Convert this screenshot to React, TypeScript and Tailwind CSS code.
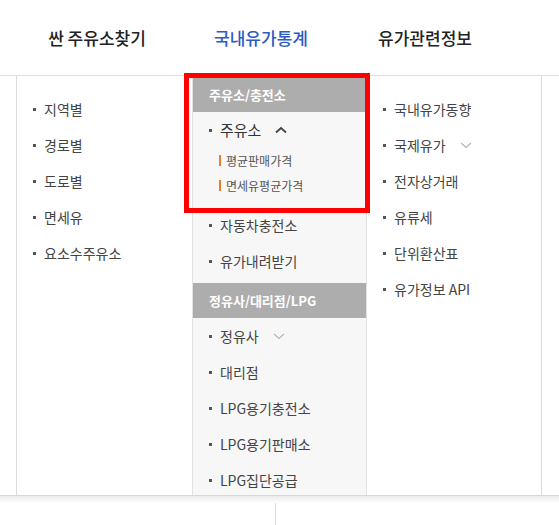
import { Fragment } from 'react';

const FONT = { fontFamily: '"Noto Sans CJK KR", "Noto Sans", sans-serif' };

type Item = { label: string; caret?: 'up' | 'down' };

const leftItems: Item[] = [
  { label: '지역별' },
  { label: '경로별' },
  { label: '도로별' },
  { label: '면세유' },
  { label: '요소수주유소' },
];

const rightItems: Item[] = [
  { label: '국내유가동향' },
  { label: '국제유가', caret: 'down' },
  { label: '전자상거래' },
  { label: '유류세' },
  { label: '단위환산표' },
  { label: '유가정보 API' },
];

function Caret({ dir }: { dir: 'up' | 'down' }) {
  if (dir === 'up') {
    return (
      <svg width="12" height="8" viewBox="0 0 12 8" className="ml-[14px]">
        <path d="M1 6.5 L6 2 L11 6.5" fill="none" stroke="#444" strokeWidth="1.8" />
      </svg>
    );
  }
  return (
    <svg width="12" height="7" viewBox="0 0 12 7" className="ml-[14px]">
      <path d="M1 1 L6 5.5 L11 1" fill="none" stroke="#b5b5b5" strokeWidth="1.2" />
    </svg>
  );
}

function MenuRow({ item, strong }: { item: Item; strong?: boolean }) {
  return (
    <li className="flex h-9 items-center pl-4">
      <span className="mr-2 h-[3px] w-[3px] bg-[#555]" />
      <span className={strong ? 'text-[15px] text-[#333]' : 'text-[14px] text-[#444]'}>{item.label}</span>
      {item.caret && <Caret dir={item.caret} />}
    </li>
  );
}

function GroupHead({ title }: { title: string }) {
  return (
    <div className="flex h-[35px] items-center bg-[#adadad] pl-4 text-[13px] font-bold text-white">{title}</div>
  );
}

export default function App() {
  return (
    <div className="relative h-[525px] w-[559px] overflow-hidden bg-white" style={FONT}>
      {/* top navigation */}
      <nav className="flex h-[76px] items-center border-b border-[#dedede] pl-[15px]">
        {['싼 주유소찾기', '국내유가통계', '유가관련정보'].map((t, i) => (
          <div
            key={t}
            className={`w-[164px] text-center text-[17px] font-medium ${i === 1 ? 'text-[#2a5cc4]' : 'text-[#222]'}`}
          >
            {t}
          </div>
        ))}
      </nav>

      {/* mega menu */}
      <div className="flex h-[419px] pl-4">
        <div className="w-[176px] border-l border-[#dcdcdc] pt-[15px]">
          <ul>
            {leftItems.map(it => (
              <MenuRow key={it.label} item={it} />
            ))}
          </ul>
        </div>

        <div className="w-[175px] border-x border-[#e2e2e2] bg-[#f7f7f7] pt-px">
          <GroupHead title="주유소/충전소" />
          <ul>
            <MenuRow item={{ label: '주유소', caret: 'up' }} strong />
            <li className="pb-[9px] pl-[26px]">
              {['평균판매가격', '면세유평균가격'].map(s => (
                <div key={s} className="flex h-[25px] items-center text-[12px] text-[#555]">
                  <span className="mr-[5px] h-[11px] w-[2px] bg-[#f27b2b]" />
                  {s}
                </div>
              ))}
            </li>
            <MenuRow item={{ label: '자동차충전소' }} />
            <MenuRow item={{ label: '유가내려받기' }} />
          </ul>
          <div className="mt-1">
            <GroupHead title="정유사/대리점/LPG" />
          </div>
          <ul>
            {[
              { label: '정유사', caret: 'down' as const },
              { label: '대리점' },
              { label: 'LPG용기충전소' },
              { label: 'LPG용기판매소' },
              { label: 'LPG집단공급' },
            ].map(it => (
              <Fragment key={it.label}>
                <MenuRow item={it} />
              </Fragment>
            ))}
          </ul>
        </div>

        <div className="w-[175px] border-r border-[#dcdcdc] pt-[15px]">
          <ul>
            {rightItems.map(it => (
              <MenuRow key={it.label} item={it} />
            ))}
          </ul>
        </div>
      </div>

      {/* page beneath */}
      <div className="h-[8px] border-t border-[#d8d8d8] bg-gradient-to-b from-[#ebebeb] to-white" />
      <div className="ml-[275px] h-[30px] border-l border-[#dcdcdc]" />

      {/* highlight annotation */}
      <div className="absolute left-[184px] top-[73px] h-[140px] w-[186px] border-[5px] border-[#ff0000]" />
    </div>
  );
}
